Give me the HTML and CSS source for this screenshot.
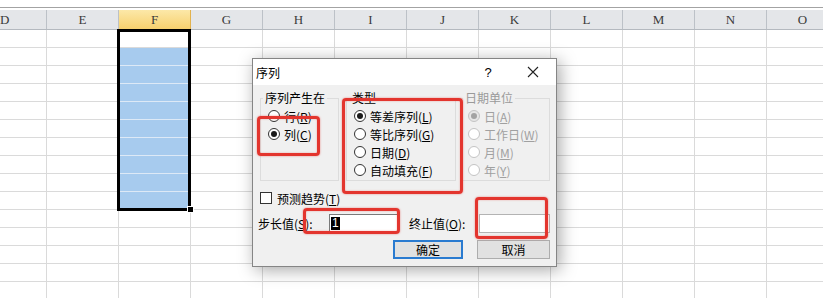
FILE: index.html
```html
<!DOCTYPE html>
<html lang="zh-CN">
<head>
<meta charset="utf-8">
<title>序列</title>
<link rel="stylesheet" href="styles.css">
</head>
<body>
<div class="sheet">
  <div class="topbar"></div>
  <div class="hdr">
    <div class="hc d">D</div>
    <div class="hc">E</div>
    <div class="hc on">F</div>
    <div class="hc">G</div>
    <div class="hc">H</div>
    <div class="hc">I</div>
    <div class="hc">J</div>
    <div class="hc">K</div>
    <div class="hc">L</div>
    <div class="hc">M</div>
    <div class="hc">N</div>
    <div class="hc">O</div>
  </div>
  <div class="grid">
    <div class="r"><span class="d"></span><span></span><span></span><span></span><span></span><span></span><span></span><span></span><span></span><span></span><span></span><span></span></div>
    <div class="r"><span class="d"></span><span></span><span class="hl"></span><span></span><span></span><span></span><span></span><span></span><span></span><span></span><span></span><span></span></div>
    <div class="r"><span class="d"></span><span></span><span class="hl"></span><span></span><span></span><span></span><span></span><span></span><span></span><span></span><span></span><span></span></div>
    <div class="r"><span class="d"></span><span></span><span class="hl"></span><span></span><span></span><span></span><span></span><span></span><span></span><span></span><span></span><span></span></div>
    <div class="r"><span class="d"></span><span></span><span class="hl"></span><span></span><span></span><span></span><span></span><span></span><span></span><span></span><span></span><span></span></div>
    <div class="r"><span class="d"></span><span></span><span class="hl"></span><span></span><span></span><span></span><span></span><span></span><span></span><span></span><span></span><span></span></div>
    <div class="r"><span class="d"></span><span></span><span class="hl"></span><span></span><span></span><span></span><span></span><span></span><span></span><span></span><span></span><span></span></div>
    <div class="r"><span class="d"></span><span></span><span class="hl"></span><span></span><span></span><span></span><span></span><span></span><span></span><span></span><span></span><span></span></div>
    <div class="r"><span class="d"></span><span></span><span class="hl"></span><span></span><span></span><span></span><span></span><span></span><span></span><span></span><span></span><span></span></div>
    <div class="r"><span class="d"></span><span></span><span class="hl"></span><span></span><span></span><span></span><span></span><span></span><span></span><span></span><span></span><span></span></div>
    <div class="r"><span class="d"></span><span></span><span></span><span></span><span></span><span></span><span></span><span></span><span></span><span></span><span></span><span></span></div>
    <div class="r"><span class="d"></span><span></span><span></span><span></span><span></span><span></span><span></span><span></span><span></span><span></span><span></span><span></span></div>
    <div class="r"><span class="d"></span><span></span><span></span><span></span><span></span><span></span><span></span><span></span><span></span><span></span><span></span><span></span></div>
    <div class="r"><span class="d"></span><span></span><span></span><span></span><span></span><span></span><span></span><span></span><span></span><span></span><span></span><span></span></div>
    <div class="r"><span class="d"></span><span></span><span></span><span></span><span></span><span></span><span></span><span></span><span></span><span></span><span></span><span></span></div>
  </div>

  <div class="selbox"></div>
  <div class="handle"></div>

  <div class="dlg">
    <div class="tb">
      <span class="t">序列</span>
      <span class="q">?</span>
      <span class="x"><svg width="12" height="12" viewBox="0 0 12 12"><path d="M1 1L11 11M11 1L1 11" stroke="#222" stroke-width="1.1" fill="none"/></svg></span>
    </div>
    <div class="body">
      <div class="groups">
        <fieldset class="g1">
          <legend>序列产生在</legend>
          <div class="opt"><i class="rb"></i><span>行(<u>R</u>)</span></div>
          <div class="opt"><i class="rb on"></i><span>列(<u>C</u>)</span></div>
        </fieldset>
        <fieldset class="g2">
          <legend>类型</legend>
          <div class="opt"><i class="rb on"></i><span>等差序列(<u>L</u>)</span></div>
          <div class="opt"><i class="rb"></i><span>等比序列(<u>G</u>)</span></div>
          <div class="opt"><i class="rb"></i><span>日期(<u>D</u>)</span></div>
          <div class="opt"><i class="rb"></i><span>自动填充(<u>F</u>)</span></div>
        </fieldset>
        <fieldset class="g3 dis">
          <legend>日期单位</legend>
          <div class="opt"><i class="rb on"></i><span>日(<u>A</u>)</span></div>
          <div class="opt"><i class="rb"></i><span>工作日(<u>W</u>)</span></div>
          <div class="opt"><i class="rb"></i><span>月(<u>M</u>)</span></div>
          <div class="opt"><i class="rb"></i><span>年(<u>Y</u>)</span></div>
        </fieldset>
      </div>
      <div class="chkrow"><i class="cb"></i><span>预测趋势(<u>T</u>)</span></div>
      <div class="vals">
        <span class="lb1">步长值(<u>S</u>):</span>
        <span class="in in1"><b class="selt">1</b></span>
        <span class="lb2">终止值(<u>O</u>):</span>
        <span class="in in2"></span>
      </div>
      <div class="btns">
        <span class="btn ok">确定</span>
        <span class="btn">取消</span>
      </div>
    </div>
  </div>

  <div class="mark m1"></div>
  <div class="mark m2"></div>
  <div class="mark m3"></div>
  <div class="mark m4"></div>
</div>
</body>
</html>
```

FILE: styles.css
```css
* { box-sizing: border-box; }
html, body { margin: 0; padding: 0; }
body {
  width: 823px;
  height: 298px;
  overflow: hidden;
  background: #fff;
  font-family: "Noto Sans CJK SC", "Noto Sans", sans-serif;
}
.sheet {
  position: relative;
  width: 823px;
  height: 298px;
  overflow: hidden;
}
.topbar {
  height: 8px;
  border-bottom: 1px solid #a3a3a3;
}
.hdr {
  margin-top: 2px;
  display: flex;
  height: 20px;
  background: #e4e6e9;
  border-bottom: 1px solid #b4b9bf;
}
.hc {
  flex: none;
  width: 72px;
  border-right: 1px solid #bcc1c7;
  display: flex;
  align-items: center;
  justify-content: center;
  font-family: "Liberation Serif", "DejaVu Serif", serif;
  font-size: 13px;
  color: #3a3a3a;
}
.hc.d { width: 47px; justify-content: flex-start; padding-left: 0; }
.hc.on {
  background: linear-gradient(#fce8a8, #f7d06e);
  border-right-color: #e2b24e;
}
.grid { display: flex; flex-direction: column; }
.r {
  display: flex;
  height: 18px;
  border-bottom: 1px solid #dadada;
}
.r span {
  flex: none;
  width: 72px;
  height: 17px;
  border-right: 1px solid #dadada;
}
.r span.d { width: 47px; }
.r span.hl {
  background: #a7cbee;
  box-shadow: 0 1px 0 #dde9f6, inset 1px 0 0 #fff;
}
.selbox {
  position: absolute;
  left: 117px;
  top: 29px;
  width: 74px;
  height: 182px;
  border: 3px solid #000;
}
.handle {
  position: absolute;
  left: 187px;
  top: 206px;
  width: 7px;
  height: 7px;
  background: #000;
  border: 1px solid #fff;
}

/* dialog */
.dlg {
  position: absolute;
  left: 252px;
  top: 58px;
  width: 305px;
  height: 209px;
  border: 1px solid #858585;
  background: #f0f0f0;
  box-shadow: 3px 3px 16px rgba(0,0,0,0.35);
  display: flex;
  flex-direction: column;
  font-size: 12px;
  color: #000;
}
.tb {
  height: 26px;
  background: #fff;
  display: flex;
  align-items: center;
  padding-left: 3px;
}
.tb .t { flex: 1; font-size: 12px; }
.tb .q {
  width: 44px;
  text-align: center;
  font-family: "Liberation Sans", sans-serif;
  font-size: 13px;
}
.tb .x {
  width: 46px;
  display: flex;
  justify-content: center;
  align-items: center;
}
.body {
  padding: 5px 6px 0 7px;
  display: flex;
  flex-direction: column;
}
.groups { display: flex; }
fieldset {
  margin: 0;
  padding: 0;
  border: 1px solid #dcdcdc;
  height: 91px;
  min-width: 0;
}
legend {
  margin-left: 2px;
  padding: 0 2px;
  font-size: 12px;
  line-height: 16px;
}
.g1 { width: 79px; }
.g2 { width: 110px; margin-left: 7px; }
.g2 legend { margin-left: 3px; }
.g3 { width: 90px; margin-left: 4px; }
.opt {
  display: flex;
  align-items: center;
  height: 18px;
  padding-left: 7px;
  gap: 4px;
  white-space: nowrap;
}
.g1 .opt:first-of-type { margin-top: 1px; }
.g2 .opt:first-of-type { margin-top: 1px; }
.g3 .opt:first-of-type { margin-top: 1px; }
.rb {
  flex: none;
  width: 12px;
  height: 12px;
  border: 1px solid #333;
  border-radius: 50%;
  background: #fff;
  display: flex;
  align-items: center;
  justify-content: center;
}
.rb.on::after {
  content: "";
  width: 6px;
  height: 6px;
  border-radius: 50%;
  background: #1a1a1a;
}
.dis { color: #a0a0a0; }
.dis legend { color: #9a9a9a; }
.dis .rb { border-color: #c4c4c4; background: #fff; }
.dis .rb.on { background: #e6e6e6; }
.dis .rb.on::after { background: #a3a3a3; }
.chkrow {
  margin-top: 9px;
  height: 16px;
  display: flex;
  align-items: center;
  gap: 5px;
}
.cb {
  width: 12px;
  height: 12px;
  border: 1px solid #333;
  background: #fff;
}
.vals {
  margin-top: 8px;
  height: 19px;
  display: flex;
  align-items: center;
}
.lb1 { width: 71px; margin-left: -2px; }
.lb2 { width: 70px; margin-left: 11px; }
.in {
  height: 19px;
  background: #fff;
  border: 1px solid #b3b3b3;
  display: flex;
  align-items: center;
}
.in1 { width: 69px; border-color: #7a7a7a; padding-left: 1px; }
.in2 { width: 71px; }
.selt {
  background: #000;
  color: #fff;
  font-weight: normal;
  font-family: "Liberation Sans", sans-serif;
  font-size: 12px;
  line-height: 13px;
  padding: 0 1px;
}
.btns {
  margin-top: 7px;
  display: flex;
  justify-content: flex-end;
  gap: 14px;
}
.btn {
  width: 73px;
  height: 19px;
  background: #e1e1e1;
  border: 1px solid #adadad;
  display: flex;
  align-items: center;
  justify-content: center;
  font-size: 12px;
}
.btn.ok {
  width: 70px;
  border: 2px solid #2a7bd0;
}

/* red annotation marks */
.mark {
  position: absolute;
  border: 3px solid #e3352e;
  border-radius: 4px;
  box-shadow: 0 0 2px rgba(227,53,46,0.6), inset 0 0 2px rgba(227,53,46,0.4);
}
.m1 { left: 257px; top: 116px; width: 63px; height: 40px; }
.m2 { left: 342px; top: 98px; width: 121px; height: 96px; }
.m3 { left: 303px; top: 208px; width: 97px; height: 26px; }
.m4 { left: 475px; top: 197px; width: 73px; height: 42px; }
```
